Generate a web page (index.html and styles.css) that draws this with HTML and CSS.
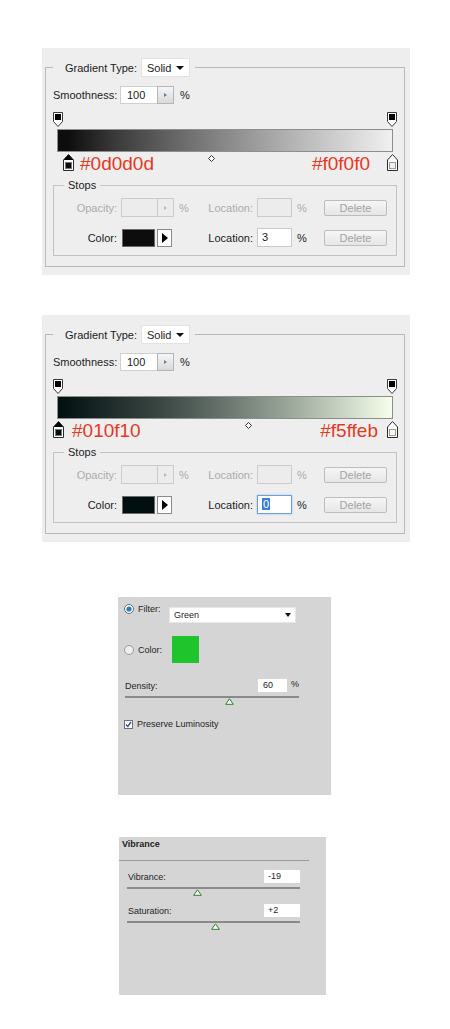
FILE: index.html
```html
<!DOCTYPE html>
<html lang="en">
<head>
  <meta charset="UTF-8" />
  <meta name="viewport" content="width=device-width, initial-scale=1.0" />
  <title>Gradient Editor and Adjustments</title>
  <link rel="stylesheet" href="styles.css">
</head>
<body>

  <!-- gradient editor, grey ramp -->
  <div class="panel grad">
    <fieldset class="outer">
      <legend class="type-legend"><span class="legend-in">Gradient Type: <span class="select">Solid<i class="caret"></i></span></span></legend>
      <div class="smooth-row">
        <label class="smooth-lbl">Smoothness:</label>
        <span class="num"><span class="num-val">100</span><span class="spin"><i></i></span></span>
        <span class="pct">%</span>
      </div>
      <div class="ramp">
        <div class="track track-grey">
          <svg class="stop-top" style="left:0%" width="10" height="15" viewBox="0 0 10 15"><path d="M0.5 0.5H9.5V9.5L5 14.5L0.5 9.5Z" fill="#fff" stroke="#3a3a3a"/><rect x="2" y="2" width="6" height="6" fill="#000"/></svg>
          <svg class="stop-top" style="left:100%" width="10" height="15" viewBox="0 0 10 15"><path d="M0.5 0.5H9.5V9.5L5 14.5L0.5 9.5Z" fill="#fff" stroke="#3a3a3a"/><rect x="2" y="2" width="6" height="6" fill="#000"/></svg>
          <svg class="stop-bottom" style="left:3%" width="11" height="17" viewBox="0 0 11 17"><path d="M5.5 0.5L10.5 6V16.5H0.5V6Z" fill="#fff" stroke="#2a2a2a"/><path d="M5.5 0.5L10.5 6H0.5Z" fill="#000"/><rect x="2.5" y="8.5" width="6" height="6" fill="#0d0d0d" stroke="#777"/></svg>
          <svg class="stop-bottom" style="left:100%" width="11" height="17" viewBox="0 0 11 17"><path d="M5.5 0.5L10.5 6V16.5H0.5V6Z" fill="#fff" stroke="#2a2a2a"/><rect x="2.5" y="8.5" width="6" height="6" fill="#f0f0f0" stroke="#999"/></svg>
          <svg class="mid" style="left:45.7%" width="7" height="7" viewBox="0 0 7 7"><path d="M3.5 0.5L6.5 3.5L3.5 6.5L0.5 3.5Z" fill="#fff" stroke="#333"/></svg>
        </div>
        <div class="hex-row hex-wide"><span>#0d0d0d</span><span>#f0f0f0</span></div>
      </div>
      <fieldset class="stops">
        <legend>Stops</legend>
        <div class="stop-row off">
          <span class="lbl">Opacity:</span>
          <span class="field"><span class="num"><span class="num-val num-short"></span><span class="spin"><i></i></span></span></span>
          <span class="pct">%</span>
          <span class="lbl">Location:</span>
          <span class="loc"></span>
          <span class="pct pct-wide">%</span>
          <span class="btn">Delete</span>
        </div>
        <div class="stop-row">
          <span class="lbl">Color:</span>
          <span class="field"><span class="swatch" style="background:#0d0d0d"></span><span class="arrow"></span></span>
          <span class="pct"></span>
          <span class="lbl">Location:</span>
          <span class="loc">3</span>
          <span class="pct pct-wide">%</span>
          <span class="btn">Delete</span>
        </div>
      </fieldset>
    </fieldset>
  </div>

  <!-- gradient editor, dark teal to pale green -->
  <div class="panel grad">
    <fieldset class="outer">
      <legend class="type-legend"><span class="legend-in">Gradient Type: <span class="select">Solid<i class="caret"></i></span></span></legend>
      <div class="smooth-row">
        <label class="smooth-lbl">Smoothness:</label>
        <span class="num"><span class="num-val">100</span><span class="spin"><i></i></span></span>
        <span class="pct">%</span>
      </div>
      <div class="ramp">
        <div class="track track-green">
          <svg class="stop-top" style="left:0%" width="10" height="15" viewBox="0 0 10 15"><path d="M0.5 0.5H9.5V9.5L5 14.5L0.5 9.5Z" fill="#fff" stroke="#3a3a3a"/><rect x="2" y="2" width="6" height="6" fill="#000"/></svg>
          <svg class="stop-top" style="left:100%" width="10" height="15" viewBox="0 0 10 15"><path d="M0.5 0.5H9.5V9.5L5 14.5L0.5 9.5Z" fill="#fff" stroke="#3a3a3a"/><rect x="2" y="2" width="6" height="6" fill="#000"/></svg>
          <svg class="stop-bottom" style="left:0%" width="11" height="17" viewBox="0 0 11 17"><path d="M5.5 0.5L10.5 6V16.5H0.5V6Z" fill="#fff" stroke="#2a2a2a"/><path d="M5.5 0.5L10.5 6H0.5Z" fill="#000"/><rect x="2.5" y="8.5" width="6" height="6" fill="#010f10" stroke="#777"/></svg>
          <svg class="stop-bottom" style="left:100%" width="11" height="17" viewBox="0 0 11 17"><path d="M5.5 0.5L10.5 6V16.5H0.5V6Z" fill="#fff" stroke="#2a2a2a"/><rect x="2.5" y="8.5" width="6" height="6" fill="#f5ffeb" stroke="#999"/></svg>
          <svg class="mid" style="left:57%" width="7" height="7" viewBox="0 0 7 7"><path d="M3.5 0.5L6.5 3.5L3.5 6.5L0.5 3.5Z" fill="#fff" stroke="#333"/></svg>
        </div>
        <div class="hex-row hex-narrow"><span>#010f10</span><span>#f5ffeb</span></div>
      </div>
      <fieldset class="stops">
        <legend>Stops</legend>
        <div class="stop-row off">
          <span class="lbl">Opacity:</span>
          <span class="field"><span class="num"><span class="num-val num-short"></span><span class="spin"><i></i></span></span></span>
          <span class="pct">%</span>
          <span class="lbl">Location:</span>
          <span class="loc"></span>
          <span class="pct pct-wide">%</span>
          <span class="btn">Delete</span>
        </div>
        <div class="stop-row">
          <span class="lbl">Color:</span>
          <span class="field"><span class="swatch" style="background:#010f10"></span><span class="arrow"></span></span>
          <span class="pct"></span>
          <span class="lbl">Location:</span>
          <span class="loc focus"><span class="sel">0</span></span>
          <span class="pct pct-wide">%</span>
          <span class="btn">Delete</span>
        </div>
      </fieldset>
    </fieldset>
  </div>

  <!-- photo filter -->
  <div class="adj filter">
    <div class="f-row">
      <svg class="radio" width="10" height="10" viewBox="0 0 10 10"><circle cx="5" cy="5" r="4.5" fill="#fff" stroke="#6c6c6c"/><circle cx="5" cy="5" r="2.6" fill="#2b7bbd"/></svg>
      <span class="f-lbl">Filter:</span>
      <span class="drop">Green<i class="caret caret-sm"></i></span>
    </div>
    <div class="f-row color-row">
      <svg class="radio" width="10" height="10" viewBox="0 0 10 10"><circle cx="5" cy="5" r="4.5" fill="#eeeeee" stroke="#9a9a9a"/></svg>
      <span class="f-lbl">Color:</span>
      <span class="green"></span>
    </div>
    <div class="density">
      <span class="d-lbl">Density:</span>
      <span class="d-in">60</span>
      <span class="d-pct">%</span>
    </div>
    <div class="slider slider-density">
      <svg class="thumb" style="left:60%" width="9" height="7" viewBox="0 0 9 7"><path d="M4.5 0.8L8.3 6.3H0.7Z" fill="#fff" stroke="#2e7d32"/></svg>
    </div>
    <div class="lum">
      <svg class="check" width="9" height="9" viewBox="0 0 9 9"><rect x="0.5" y="0.5" width="8" height="8" fill="#fff" stroke="#707070"/><path d="M2 4.5L3.8 6.5L7 2" fill="none" stroke="#2a4ea0" stroke-width="1.4"/></svg>
      <span>Preserve Luminosity</span>
    </div>
  </div>

  <!-- vibrance -->
  <div class="adj vib">
    <div class="vib-head">Vibrance</div>
    <div class="vib-body">
      <div class="v-row">
        <span>Vibrance:</span>
        <span class="v-in">-19</span>
      </div>
      <div class="slider">
        <svg class="thumb" style="left:40.5%" width="9" height="7" viewBox="0 0 9 7"><path d="M4.5 0.8L8.3 6.3H0.7Z" fill="#fff" stroke="#2e7d32"/></svg>
      </div>
      <div class="v-row v-second">
        <span>Saturation:</span>
        <span class="v-in">+2</span>
      </div>
      <div class="slider">
        <svg class="thumb" style="left:51%" width="9" height="7" viewBox="0 0 9 7"><path d="M4.5 0.8L8.3 6.3H0.7Z" fill="#fff" stroke="#2e7d32"/></svg>
      </div>
    </div>
  </div>

</body>
</html>
```

FILE: styles.css
```css
* {
  box-sizing: border-box;
}
body {
  margin: 0;
  background: #fff;
  font-family: "Liberation Sans", Arial, sans-serif;
  color: #1b1b1b;
}

/* gradient editor panels */
.grad {
  width: 368px;
  margin: 48px 0 0 42px;
  padding: 10px 0 8px 3px;
  background: #eeeeee;
  font-size: 11px;
}
.grad + .grad {
  margin-top: 40px;
}
.outer {
  width: 360px;
  margin: 0;
  padding: 9px 7px 10px;
  border: 1px solid #b9b9b9;
}
.type-legend {
  padding: 0 5px 0 12px;
}
.legend-in {
  display: flex;
  align-items: center;
  height: 19px;
}
.select {
  display: flex;
  align-items: center;
  justify-content: space-between;
  width: 49px;
  height: 19px;
  margin-left: 4px;
  padding: 0 5px;
  background: #fff;
  border: 1px solid #e2e2e2;
}
.caret {
  width: 0;
  height: 0;
  border-left: 4px solid transparent;
  border-right: 4px solid transparent;
  border-top: 4px solid #111;
}
.smooth-row {
  display: flex;
  align-items: center;
  height: 18px;
}
.smooth-lbl {
  width: 67px;
}
.num {
  display: flex;
  height: 18px;
}
.num-val {
  width: 37px;
  padding: 0 6px;
  line-height: 16px;
  background: #fff;
  border: 1px solid #cfcfcf;
  border-right: 0;
}
.num-short {
  width: 36px;
}
.spin {
  display: flex;
  align-items: center;
  justify-content: center;
  width: 17px;
  border: 1px solid #b5b5b5;
  background: linear-gradient(#f6f6f6, #d9d9d9);
}
.spin i {
  border-top: 2px solid transparent;
  border-bottom: 2px solid transparent;
  border-left: 3px solid #5d7fa8;
}
.pct {
  width: 16px;
  padding-left: 5px;
}
.smooth-row .pct {
  padding-left: 6px;
}

/* ramp with stops */
.ramp {
  margin-top: 8px;
  padding: 17px 4px 0;
}
.track {
  position: relative;
  height: 23px;
  border: 1px solid #8e8e8e;
}
.track-grey {
  background: linear-gradient(to right, #0d0d0d 3%, 45.7%, #f0f0f0);
}
.track-green {
  background: linear-gradient(to right, #010f10 0%, 57%, #f5ffeb);
}
.stop-top {
  position: absolute;
  top: -18px;
  margin-left: -5px;
}
.stop-bottom {
  position: absolute;
  top: calc(100% + 3px);
  margin-left: -5px;
}
.mid {
  position: absolute;
  top: calc(100% + 4px);
  margin-left: -3px;
}
.hex-row {
  display: flex;
  justify-content: space-between;
  height: 20px;
  margin-top: 2px;
  font-size: 19px;
  line-height: 20px;
  color: #e5391f;
}
.hex-wide {
  padding: 0 23px;
}
.hex-narrow {
  padding: 0 15px;
}

/* stops group */
.stops {
  margin: 4px 0 0;
  padding: 6px 0 8px;
  border: 1px solid #c3c3c3;
}
.stops legend {
  margin-left: 10px;
  padding: 0 4px;
  line-height: 14px;
}
.stop-row {
  display: flex;
  align-items: center;
  height: 19px;
}
.stop-row + .stop-row {
  margin-top: 11px;
}
.lbl {
  width: 63px;
  margin-right: 4px;
  text-align: right;
}
.field {
  display: flex;
  align-items: center;
  width: 53px;
  height: 19px;
}
.off .num {
  height: 19px;
}
.loc {
  width: 35px;
  height: 19px;
  padding: 0 4px;
  line-height: 17px;
  background: #fff;
  border: 1px solid #c8c8c8;
}
.pct-wide {
  width: 32px;
}
.btn {
  width: 63px;
  height: 16px;
  border: 1px solid #bdbdbd;
  border-radius: 2px;
  background: linear-gradient(#f6f6f6, #e6e6e6);
  color: #a3a3a3;
  text-align: center;
  line-height: 14px;
}
.off {
  color: #ababab;
}
.off .num-val,
.off .loc {
  background: #ececec;
  border-color: #cbcbcb;
}
.off .spin {
  border-color: #cbcbcb;
  background: #ececec;
}
.off .spin i {
  border-left-color: #b8b8b8;
}
.swatch {
  width: 33px;
  height: 18px;
  margin-left: 1px;
  border: 1px solid #6a6a6a;
}
.arrow {
  display: flex;
  align-items: center;
  justify-content: center;
  width: 15px;
  height: 18px;
  margin-left: 2px;
  background: #fff;
  border: 1px solid #8a8a8a;
}
.arrow::before {
  content: "";
  border-top: 5px solid transparent;
  border-bottom: 5px solid transparent;
  border-left: 6px solid #000;
}
.loc.focus {
  border-color: #6e9fd6;
  box-shadow: 0 0 2px #9cc0ea;
}
.sel {
  padding: 0 1px;
  background: #3b7fd9;
  color: #fff;
}

/* adjustment panels */
.adj {
  background: #d5d5d5;
  font-size: 9px;
  color: #1e1e1e;
}
.filter {
  width: 213px;
  height: 198px;
  margin: 55px 0 0 118px;
  padding: 7px 0 0 6px;
}
.f-row {
  display: flex;
  align-items: flex-start;
}
.radio {
  flex: none;
  margin-right: 4px;
}
.f-lbl {
  width: 31px;
  line-height: 10px;
}
.drop {
  display: flex;
  align-items: center;
  justify-content: space-between;
  width: 127px;
  height: 16px;
  margin-top: 3px;
  padding: 0 4px;
  background: #fff;
  border: 1px solid #e6e6e6;
}
.caret-sm {
  border-left-width: 3px;
  border-right-width: 3px;
  border-top-width: 4px;
}
.color-row {
  align-items: center;
  margin-top: 13px;
}
.green {
  width: 27px;
  height: 27px;
  margin-left: 3px;
  background: #1fc42d;
}
.density {
  display: flex;
  align-items: center;
  width: 175px;
  height: 13px;
  margin-top: 16px;
  padding-left: 1px;
}
.d-lbl {
  flex: 1;
}
.d-in {
  width: 29px;
  height: 13px;
  padding-left: 5px;
  line-height: 13px;
  background: #fff;
}
.d-pct {
  align-self: flex-start;
  width: 8px;
  margin-left: 4px;
}
.slider {
  position: relative;
  width: 173px;
  height: 2px;
  margin-top: 4px;
  background: #8a8a8a;
}
.slider-density {
  width: 174px;
  margin-left: 1px;
}
.thumb {
  position: absolute;
  top: 2px;
  margin-left: -4px;
}
.lum {
  display: flex;
  align-items: center;
  margin-top: 21px;
}
.lum span {
  margin-left: 4px;
}

.vib {
  width: 207px;
  height: 158px;
  margin: 42px 0 0 119px;
}
.vib-head {
  width: 190px;
  height: 24px;
  padding: 1px 0 0 3px;
  font-weight: bold;
  line-height: 12px;
  border-bottom: 1px solid #9b9b9b;
}
.vib-body {
  padding: 9px 26px 0 8px;
}
.v-row {
  display: flex;
  align-items: center;
  justify-content: space-between;
  height: 13px;
  padding-left: 1px;
}
.v-second {
  margin-top: 15px;
}
.v-in {
  width: 36px;
  height: 13px;
  padding-left: 4px;
  line-height: 13px;
  background: #fff;
}
```
